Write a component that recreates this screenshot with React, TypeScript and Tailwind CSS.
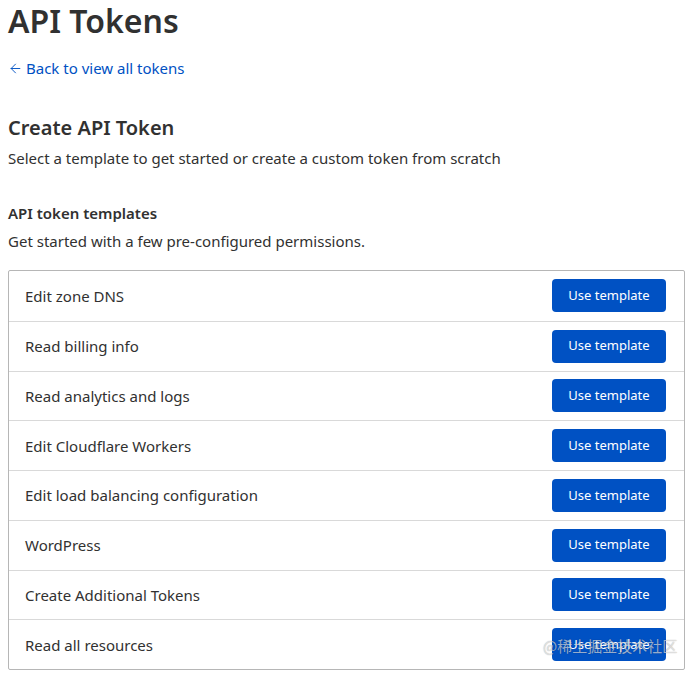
import { ArrowLeft } from "lucide-react";

const templates = [
  "Edit zone DNS",
  "Read billing info",
  "Read analytics and logs",
  "Edit Cloudflare Workers",
  "Edit load balancing configuration",
  "WordPress",
  "Create Additional Tokens",
  "Read all resources",
];

export default function App() {
  return (
    <div
      className="relative w-[693px] h-[676px] overflow-hidden bg-white px-2 text-[#313131]"
      style={{ fontFamily: '"Noto Sans", "Open Sans", sans-serif' }}
    >
      <h1 className="text-[32px] leading-[42px] font-semibold">API Tokens</h1>

      <a href="#" className="mt-[14px] flex items-center gap-[3px] text-[15px] leading-[24px] text-[#0051c3]">
        <ArrowLeft size={15} strokeWidth={1.5} />
        Back to view all tokens
      </a>

      <h2 className="mt-[34px] text-[20px] leading-[28px] font-semibold">Create API Token</h2>
      <p className="mt-[4px] text-[15px] leading-[24px]">
        Select a template to get started or create a custom token from scratch
      </p>

      <h3 className="mt-[31px] text-[15px] leading-[24px] font-semibold">API token templates</h3>
      <p className="mt-[4px] text-[15px] leading-[24px]">Get started with a few pre-configured permissions.</p>

      <div className="mt-[17px] border border-[#b6b6b6] rounded-[2px]">
        {templates.map((t, i) => (
          <div
            key={t}
            className={`flex items-center justify-between h-[49.75px] pl-[16px] pr-[18px] ${
              i > 0 ? "border-t border-[#d9d9d9]" : ""
            }`}
          >
            <span className="text-[15px] leading-[24px]">{t}</span>
            <button className="h-[33px] w-[114px] rounded-[4px] bg-[#0051c3] text-[13px] text-white">
              Use template
            </button>
          </div>
        ))}
      </div>

      <div
        className="absolute left-[543px] top-[635px] text-[15px] text-white/60"
        style={{ fontFamily: '"Noto Sans CJK SC", sans-serif', textShadow: "0 0 1px rgba(0,0,0,0.4)" }}
      >
        @稀土掘金技术社区
      </div>
    </div>
  );
}
